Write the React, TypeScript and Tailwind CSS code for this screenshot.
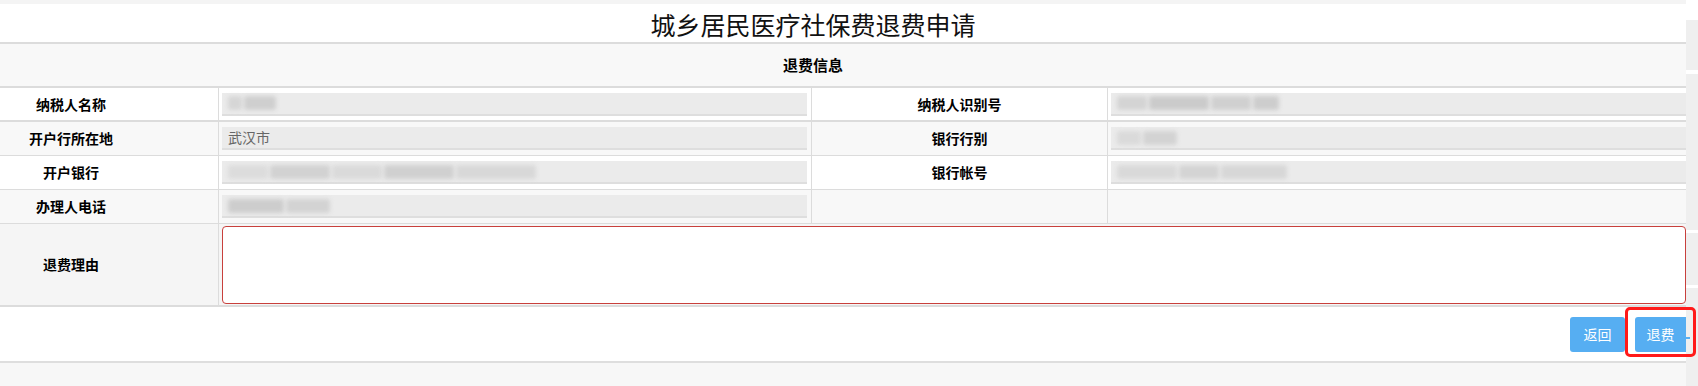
import React from "react";

const font = { fontFamily: '"Noto Sans CJK SC", "Noto Sans", sans-serif' };

function Blur({ w, tone = "#cdcdcd" }: { w: number; tone?: string }) {
  return (
    <div
      className="h-[14px] rounded-[3px] blur-[2px]"
      style={{ width: w, background: tone }}
    />
  );
}

function ValueBox({
  children,
  right = false,
}: {
  children?: React.ReactNode;
  right?: boolean;
}) {
  return (
    <div
      className={
        right
          ? "ml-[3px] h-[23px] bg-[#ebebeb] border-b-2 border-[#dedede] flex items-center pl-[6px] gap-[2px]"
          : "ml-[3px] mr-[4px] h-[23px] bg-[#ebebeb] border-b-2 border-[#dedede] flex items-center pl-[6px] gap-[2px]"
      }
    >
      {children}
    </div>
  );
}

function Row({
  bg,
  l1,
  v1,
  l2,
  v2,
  thick = false,
}: {
  bg: string;
  l1: string;
  v1?: React.ReactNode;
  l2: string;
  v2?: React.ReactNode;
  thick?: boolean;
}) {
  return (
    <div
      className={`grid grid-cols-[219px_593px_296px_1fr] h-[34px] ${bg} ${
        thick ? "border-b-2 border-[#dcdcdc]" : "border-b border-[#dcdcdc]"
      }`}
    >
      <div className="border-r border-[#dcdcdc] flex items-center justify-center pr-[76px] text-[14px] font-bold text-black">
        {l1}
      </div>
      <div className="border-r border-[#dcdcdc] flex flex-col justify-center">
        {v1 !== undefined ? <ValueBox>{v1}</ValueBox> : null}
      </div>
      <div className="border-r border-[#dcdcdc] flex items-center justify-center text-[14px] font-bold text-black">
        {l2}
      </div>
      <div className="flex flex-col justify-center overflow-hidden">
        {v2 !== undefined ? <ValueBox right>{v2}</ValueBox> : null}
      </div>
    </div>
  );
}

export default function App() {
  return (
    <div
      className="w-[1698px] h-[386px] bg-[#f7f7f7] flex overflow-hidden relative"
      style={font}
    >
      <div className="w-[1686px] flex flex-col overflow-hidden">
        <div className="h-[4px] bg-[#f4f4f4]" />
        <div className="h-[40px] bg-white border-b-2 border-[#dcdcdc] flex items-center">
          <div className="w-[1626px] text-center text-[25px] leading-none text-[#111] pt-[2px]">
            城乡居民医疗社保费退费申请
          </div>
        </div>
        <div className="h-[44px] bg-[#f8f8f8] border-b-2 border-[#dcdcdc] flex items-center">
          <div className="w-[1626px] text-center text-[15px] font-bold text-black">
            退费信息
          </div>
        </div>
        <Row
          bg="bg-white"
          thick
          l1="纳税人名称"
          v1={
            <>
              <Blur w={14} tone="#d6d6d6" />
              <Blur w={32} tone="#cfcfcf" />
            </>
          }
          l2="纳税人识别号"
          v2={
            <>
              <Blur w={30} tone="#d4d4d4" />
              <Blur w={60} tone="#cbcbcb" />
              <Blur w={40} tone="#d0d0d0" />
              <Blur w={26} tone="#cdcdcd" />
            </>
          }
        />
        <Row
          bg="bg-[#f8f8f8]"
          l1="开户行所在地"
          v1={<span className="text-[14px] text-[#666]">武汉市</span>}
          l2="银行行别"
          v2={
            <>
              <Blur w={24} tone="#dadada" />
              <Blur w={34} tone="#d3d3d3" />
            </>
          }
        />
        <Row
          bg="bg-white"
          l1="开户银行"
          v1={
            <>
              <Blur w={40} tone="#dcdcdc" />
              <Blur w={60} tone="#d2d2d2" />
              <Blur w={50} tone="#dadada" />
              <Blur w={70} tone="#d0d0d0" />
              <Blur w={80} tone="#d8d8d8" />
            </>
          }
          l2="银行帐号"
          v2={
            <>
              <Blur w={60} tone="#d9d9d9" />
              <Blur w={40} tone="#d4d4d4" />
              <Blur w={66} tone="#d7d7d7" />
            </>
          }
        />
        <Row
          bg="bg-[#f8f8f8]"
          l1="办理人电话"
          v1={
            <>
              <Blur w={56} tone="#cdcdcd" />
              <Blur w={44} tone="#d3d3d3" />
            </>
          }
          l2=""
        />
        <div className="grid grid-cols-[219px_1fr] h-[83px] bg-[#f5f5f5] border-b-2 border-[#dcdcdc]">
          <div className="border-r border-[#dcdcdc] flex items-center justify-center pr-[76px] text-[14px] font-bold text-black">
            退费理由
          </div>
          <div className="overflow-hidden flex items-center">
            <div className="ml-[3px] w-[1500px] h-[78px] bg-white border border-[#c8403c] rounded-[4px]" />
          </div>
        </div>
        <div className="h-[56px] bg-white border-b-2 border-[#dedede] flex items-center justify-end gap-[10px]">
          <button className="w-[55px] h-[35px] rounded-[3px] bg-[#56aef2] text-white text-[14px]">
            返回
          </button>
          <button className="w-[51px] h-[35px] rounded-l-[3px] bg-[#56aef2] text-white text-[14px]">
            退费
          </button>
        </div>
        <div className="flex-1 bg-[#f7f7f7]" />
      </div>
      <div className="w-[12px] flex flex-col">
        <div className="h-[20px] bg-white" />
        <div className="h-[50px] bg-[#efefef]" />
        <div className="h-[4px] bg-white" />
        <div className="h-[156px] bg-[#efefef]" />
        <div className="h-[3px] bg-white" />
        <div className="h-[52px] bg-[#efefef]" />
        <div className="h-[3px] bg-white" />
        <div className="flex-1 bg-[#efefef]" />
      </div>
      <div className="absolute left-[1686px] top-[337px] w-[4px] h-[2px] bg-[#56aef2]" />
      <div className="absolute left-[1625px] top-[307px] w-[71px] h-[50px] border-[3px] border-[#ff1a1a] rounded-[5px]" />
    </div>
  );
}
